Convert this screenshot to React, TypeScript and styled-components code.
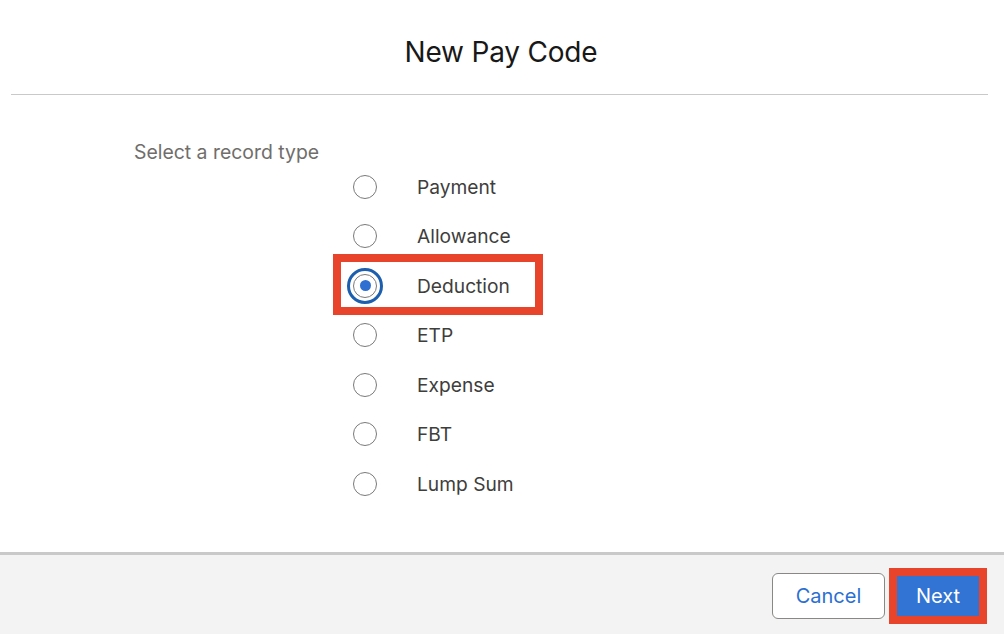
import styled, { createGlobalStyle, css } from 'styled-components';

const GlobalStyle = createGlobalStyle`
    html, body {
        margin: 0;
        padding: 0;
        background: #ffffff;
    }
    body {
        font-family: Inter, "Liberation Sans", Arial, sans-serif;
        -webkit-font-smoothing: antialiased;
    }
`;

const Modal = styled.div`
    width: 1004px;
    height: 634px;
    display: flex;
    flex-direction: column;
    background: #ffffff;
    overflow: hidden;
`;

const Header = styled.header`
    height: 94px;
    margin: 0 16px 0 11px;
    border-bottom: 1px solid #c9c9c9;
    display: flex;
    align-items: center;
    justify-content: center;
    padding-left: 3px;
    box-sizing: content-box;
`;

const Title = styled.h1`
    margin: 0;
    margin-top: 10px;
    font-size: 28px;
    font-weight: 400;
    color: #181818;
    letter-spacing: -0.2px;
`;

const Body = styled.section`
    flex: 1;
    padding: 47px 0 0 134px;
`;

const FieldLabel = styled.div`
    font-size: 19.4px;
    line-height: 20px;
    color: #706e6b;
`;

const RadioList = styled.div`
    margin-left: 219px;
    display: flex;
    flex-direction: column;
`;

const RadioRow = styled.label<{ $highlighted?: boolean }>`
    position: relative;
    height: 49.5px;
    display: flex;
    align-items: center;
    gap: 40px;
    cursor: pointer;

    ${(p) =>
        p.$highlighted &&
        css`
            &::after {
                content: '';
                position: absolute;
                left: -20px;
                top: -7px;
                width: 210px;
                height: 61px;
                box-sizing: border-box;
                border: 8px solid #e8432b;
                pointer-events: none;
            }
        `}
`;

const RadioCircle = styled.span<{ $checked?: boolean }>`
    position: relative;
    width: 24px;
    height: 24px;
    box-sizing: border-box;
    border-radius: 50%;
    border: 1px solid #7a7a7a;
    background: #ffffff;
    flex-shrink: 0;

    ${(p) =>
        p.$checked &&
        css`
            &::before {
                content: '';
                position: absolute;
                inset: -7px;
                border-radius: 50%;
                border: 3px solid #1c5fae;
            }
            &::after {
                content: '';
                position: absolute;
                left: 50%;
                top: 50%;
                width: 11px;
                height: 11px;
                margin: -5.5px 0 0 -5.5px;
                border-radius: 50%;
                background: #2f6fd1;
            }
        `}
`;

const RadioText = styled.span`
    font-size: 19.2px;
    color: #3e3e3c;
`;

const Footer = styled.footer`
    height: 79px;
    border-top: 3px solid #c9c9c9;
    background: #f3f3f3;
    display: flex;
    align-items: center;
    justify-content: flex-end;
    padding-right: 25px;
`;

const Button = styled.button<{ $variant: 'neutral' | 'brand'; $highlighted?: boolean }>`
    font-family: inherit;
    font-size: 20px;
    border-radius: 6px;
    cursor: pointer;

    ${(p) =>
        p.$variant === 'neutral'
            ? css`
                  width: 113px;
                  height: 46px;
                  margin-top: 3px;
                  background: #ffffff;
                  border: 1px solid #8a8886;
                  color: #2b6fd2;
              `
            : css`
                  width: 82px;
                  height: 40px;
                  margin-left: 12px;
                  margin-top: 2px;
                  padding: 0;
                  background: #3174d3;
                  border: none;
                  border-radius: 0;
                  color: #ffffff;
              `}

    ${(p) =>
        p.$highlighted &&
        css`
            outline: 8px solid #e8432b;
            outline-offset: 0;
        `}
`;

const recordTypes = ['Payment', 'Allowance', 'Deduction', 'ETP', 'Expense', 'FBT', 'Lump Sum'];
const selected = 'Deduction';

export default function App() {
    return (
        <Modal>
            <GlobalStyle />
            <Header>
                <Title>New Pay Code</Title>
            </Header>

            <Body>
                <FieldLabel>Select a record type</FieldLabel>
                <RadioList>
                    {recordTypes.map((type) => (
                        <RadioRow key={type} $highlighted={type === selected}>
                            <RadioCircle $checked={type === selected} />
                            <RadioText>{type}</RadioText>
                        </RadioRow>
                    ))}
                </RadioList>
            </Body>

            <Footer>
                <Button $variant="neutral">Cancel</Button>
                <Button $variant="brand" $highlighted>
                    Next
                </Button>
            </Footer>
        </Modal>
    );
}
